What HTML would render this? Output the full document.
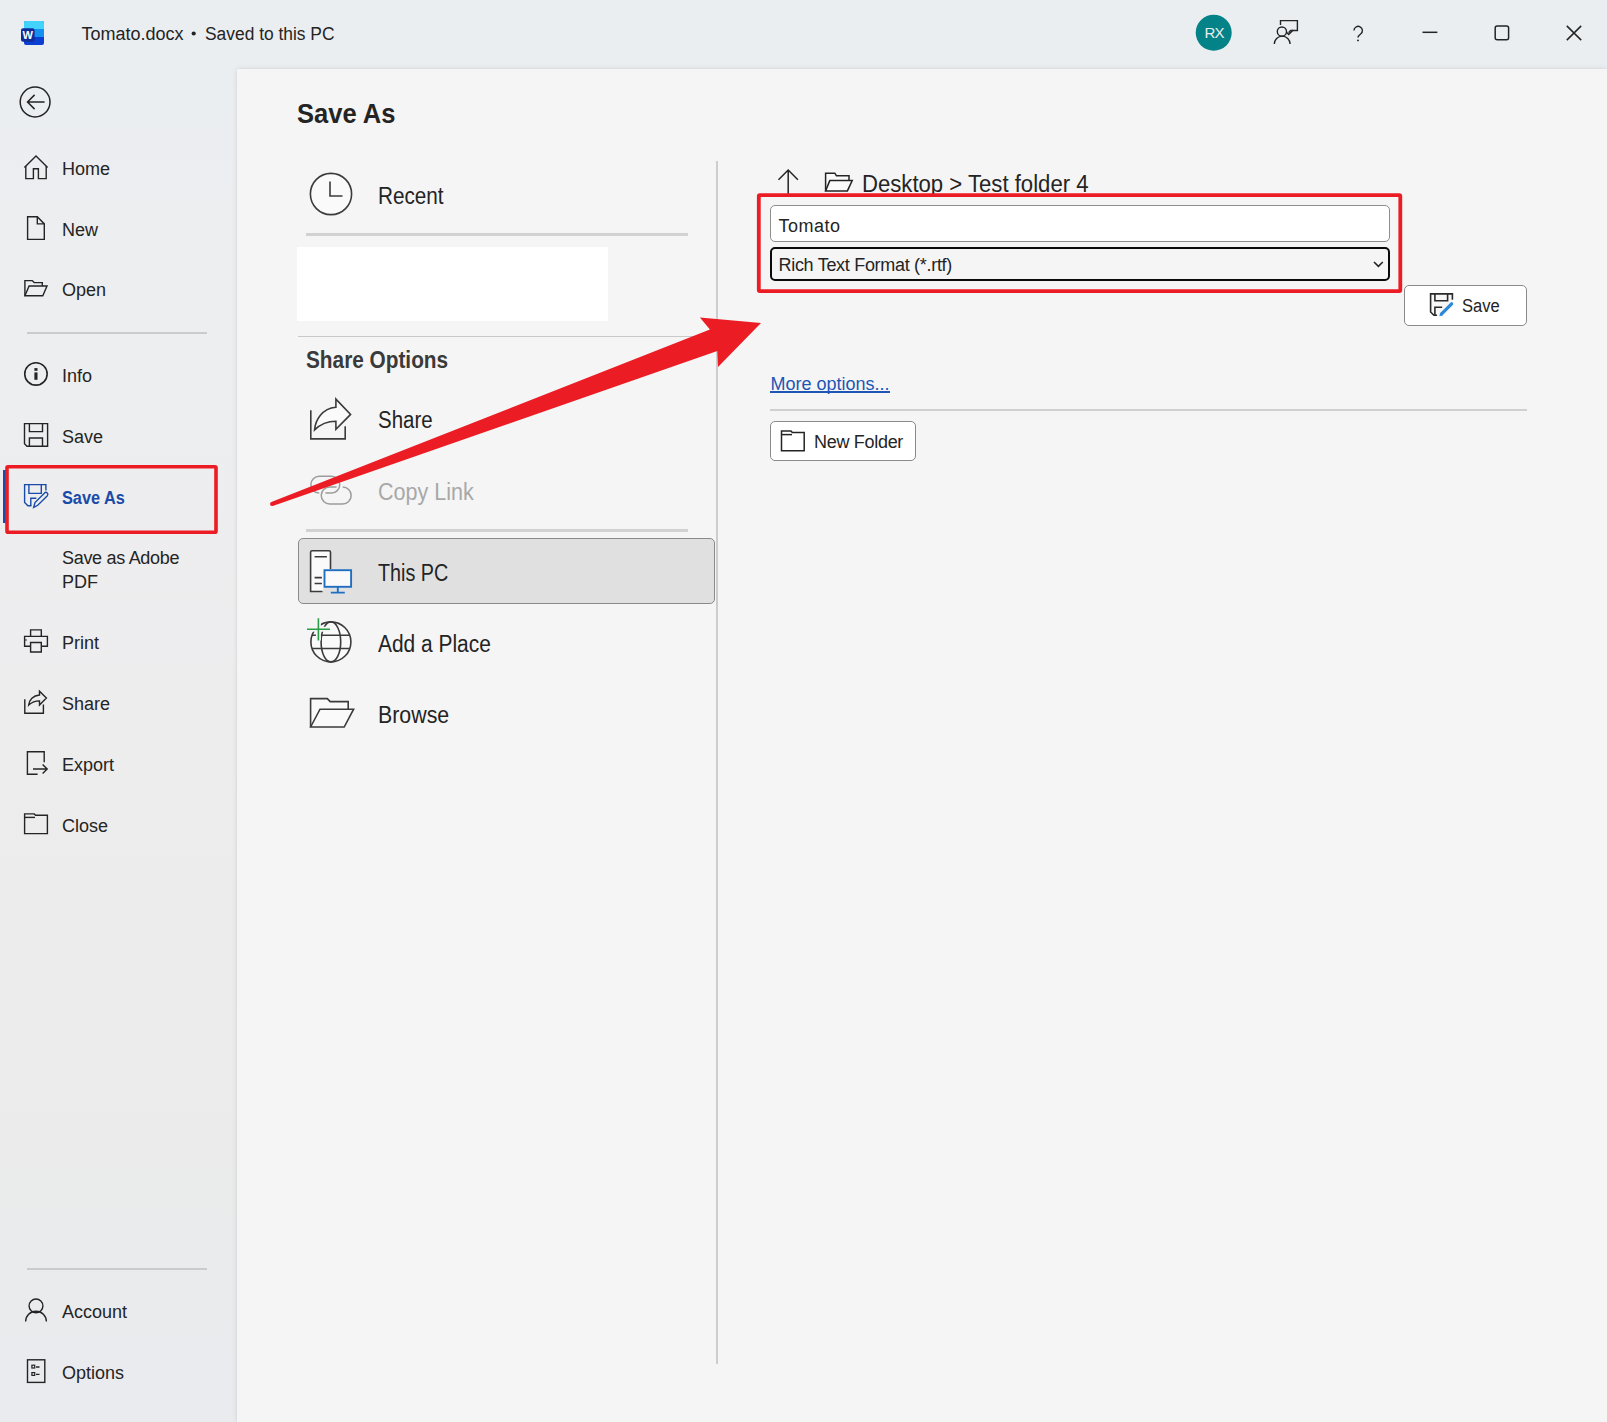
<!DOCTYPE html>
<html><head><meta charset="utf-8">
<style>
html,body{margin:0;padding:0;width:1607px;height:1422px;overflow:hidden;}
body{position:relative;background:#F5F5F5;font-family:"Liberation Sans",sans-serif;color:#242424;}
.t{position:absolute;white-space:nowrap;line-height:1;}
.abs{position:absolute;}
svg{position:absolute;overflow:visible;}
#titlebar{position:absolute;left:0;top:0;width:1607px;height:69px;background:#EBEEF1;}
#sidebar{position:absolute;left:0;top:69px;width:237px;height:1353px;background:linear-gradient(180deg,#EBEEF1 0%,#EDEEF0 20%,#EEEDEE 50%,#EBEBEB 80%,#E9EBEF 100%);}
#content{position:absolute;left:237px;top:69px;width:1370px;height:1353px;background:#F5F5F5;box-shadow:0 0 6px rgba(0,0,0,0.09),0 0 1.5px rgba(0,0,0,0.08);}
.sb{font-size:18px;}
</style></head>
<body>
<div id="titlebar"></div>
<div id="sidebar"></div>
<div id="content"></div>

<!-- Title bar -->
<svg style="left:0;top:0" width="1607" height="68">
  <!-- word icon -->
  <rect x="24" y="21" width="20" height="24" rx="2" fill="#0B3FD1"/>
  <path d="M24 23 a2 2 0 0 1 2 -2 h16 a2 2 0 0 1 2 2 v6 h-20z" fill="#41D3FD"/>
  <rect x="24" y="29" width="20" height="8" fill="#1490F0"/>
  <rect x="21" y="28.2" width="13.6" height="13.6" rx="2" fill="#0F2C9B"/>
  <text x="27.8" y="39.2" font-family="Liberation Sans" font-weight="700" font-size="11" fill="#fff" text-anchor="middle">W</text>
  <!-- avatar -->
  <circle cx="1213.7" cy="32.7" r="18" fill="#038387"/>
  <text x="1214.2" y="38.3" font-family="Liberation Sans" font-size="15" letter-spacing="-0.6" fill="#EDEDED" text-anchor="middle">RX</text>
  <!-- coauthoring icon -->
  <g fill="none" stroke="#242424" stroke-width="1.4">
    <path d="M1280.5 25 V20.6 H1297.4 V30.5 H1290.6 l-2 2.2"/>
    <path d="M1286.5 32.2 l2.2 2.2 l4.5 -4.5"/>
    <circle cx="1281.9" cy="31.6" r="4.6"/>
    <path d="M1274.3 44 A7.9 7.9 0 0 1 1290.1 44"/>
  </g>
  <!-- help -->
  <path d="M1354 30.6 A4.2 4.2 0 1 1 1360.6 34 C1359 35.2 1358 36 1358 37.6" fill="none" stroke="#242424" stroke-width="1.4"/><circle cx="1358" cy="40.4" r="0.95" fill="#242424"/>
  <!-- min -->
  <path d="M1422.5 32.3 H1437.4" stroke="#242424" stroke-width="1.5"/>
  <!-- max -->
  <rect x="1495.2" y="26.1" width="13.4" height="13.6" rx="2" fill="none" stroke="#242424" stroke-width="1.5"/>
  <!-- close -->
  <path d="M1566.8 25.9 L1581.2 40.1 M1581.2 25.9 L1566.8 40.1" stroke="#242424" stroke-width="1.5"/>
</svg>
<div class="t" style="left:81.5px;top:24.7px;font-size:18px;">Tomato.docx</div>
<div class="t" style="left:204.8px;top:24.7px;font-size:18px;transform:scaleX(0.966);transform-origin:0 0;">Saved to this PC</div>
<svg style="left:0;top:0" width="240" height="60"><circle cx="193.7" cy="33.5" r="2.1" fill="#242424"/></svg>

<!-- Sidebar -->
<svg style="left:0;top:0" width="237" height="1422">
 <g fill="none" stroke="#242424" stroke-width="1.4" stroke-linejoin="miter">
  <!-- back -->
  <circle cx="35.1" cy="102" r="14.9" stroke-width="1.5"/>
  <path d="M27.3 102 H44.6 M34.6 94.9 L27.5 102 L34.6 109.1" stroke-width="1.5"/>
  <!-- home -->
  <path d="M24.4 167.6 L36 156 L47.6 167.6"/>
  <path d="M25.8 166 V178.6 H33.4 V168.8 H38.4 V178.6 H46.2 V166"/>
  <!-- new -->
  <path d="M27.6 216.8 H37.3 L44.3 223.9 V239.4 H27.6 Z"/>
  <path d="M37.3 216.8 V223.9 H44.3"/>
  <!-- open -->
  <path d="M24.9 295.7 V280.6 H32.2 L34.2 282.6 H42.3 V286"/>
  <path d="M24.9 295.7 L29.1 286 H47 L42.8 295.7 Z"/>
  <!-- separator handled by div -->
  <!-- info -->
  <circle cx="35.95" cy="373.9" r="11.2" stroke-width="1.6"/>
  <!-- save -->
  <path d="M24.5 423.6 H47.6 V446.3 H27 L24.5 443.8 Z"/>
  <path d="M29.4 423.6 V431.6 H42.5 V423.6"/>
  <path d="M29.4 446.3 V438 H42.5 V446.3"/>
  <!-- print -->
  <path d="M30.6 636.4 V629.9 H41.3 V636.4"/>
  <path d="M30.6 646.3 H24.6 V636.4 H47.4 V646.3 H41.3"/>
  <path d="M30.6 652 V642.5 H41.3 V652 Z"/>
  <!-- share -->
  <path d="M24.8 699.3 V713.3 H43.4 V704.5"/>
  <path d="M28.7 705.1 C29.3 700 33 695.5 39.5 695 V691.2 L46.4 698.1 L39.5 705 V700.9 C35 700.9 31.5 702.5 28.7 705.1 Z" stroke-linejoin="miter"/>
  <!-- export -->
  <path d="M44.2 762.3 V751.7 H27.4 V774.2 H37.6"/>
  <path d="M33 769 H47 M42.6 764.4 L47.2 769 L42.6 773.6"/>
  <!-- close -->
  <path d="M24.6 833.6 V813.9 H34.2 L35.6 815.3 H47.4 V833.6 Z"/>
  <path d="M24.6 817.4 H35"/>
  <!-- account -->
  <circle cx="36" cy="1305.9" r="6.9"/>
  <path d="M25.6 1321.6 A10.4 10.4 0 0 1 46.4 1321.6"/>
  <!-- options -->
  <rect x="27.5" y="1359.8" width="17.3" height="22.6"/>
  <path d="M36 1367 H39.5 M36 1374.4 H39.5"/>
 </g>
 <g fill="#242424">
  <rect x="34.4" y="368.1" width="3.1" height="2.7"/>
  <rect x="34.4" y="372.4" width="3.1" height="7.4"/>
  <circle cx="26" cy="640" r="0.8"/>
 </g>
 <g fill="none" stroke="#242424" stroke-width="1.2">
  <rect x="31.9" y="1365.2" width="2.8" height="2.8"/>
  <rect x="31.9" y="1372.6" width="2.8" height="2.8"/>
 </g>
 <!-- Save As (blue) -->
 <g fill="none" stroke="#1A4BA8" stroke-width="1.4">
  <path d="M31.4 505.8 H27.9 L24.6 502.5 V484.6 H45.9 V490.4"/>
  <path d="M28.9 484.6 V493.4 H41.3 V484.6"/>
  <path d="M30.8 505.8 V498.2 H36.4"/>
  <path d="M33.7 507.3 L35 502.5 L44.6 492.9 A1.95 1.95 0 0 1 47.35 495.65 L37.75 505.25 Z"/>
 </g>
 <!-- active indicator -->
 <rect x="3" y="470" width="3" height="53" fill="#1A4BA8"/>
 <!-- separators -->
 <rect x="27" y="332" width="180" height="2" fill="#CBCBCB"/>
 <rect x="27" y="1268" width="180" height="2" fill="#CBCBCB"/>
</svg>
<div class="t sb" style="left:62px;top:159.5px;">Home</div>
<div class="t sb" style="left:62px;top:220.8px;">New</div>
<div class="t sb" style="left:62px;top:281.3px;">Open</div>
<div class="t sb" style="left:62px;top:367.1px;">Info</div>
<div class="t sb" style="left:62px;top:428.1px;">Save</div>
<div class="t sb" style="left:62px;top:489px;font-weight:700;color:#1A4BA8;transform:scaleX(0.905);transform-origin:0 0;">Save As</div>
<div class="t sb" style="left:62px;top:548.5px;letter-spacing:-0.3px;">Save as Adobe</div>
<div class="t sb" style="left:62px;top:572.8px;">PDF</div>
<div class="t sb" style="left:62px;top:633.8px;">Print</div>
<div class="t sb" style="left:62px;top:694.8px;">Share</div>
<div class="t sb" style="left:62px;top:755.6px;">Export</div>
<div class="t sb" style="left:62px;top:816.6px;">Close</div>
<div class="t sb" style="left:62px;top:1303.4px;">Account</div>
<div class="t sb" style="left:62px;top:1363.7px;">Options</div>

<!-- Middle column -->
<div class="t" style="left:296.5px;top:99.6px;font-size:28px;font-weight:700;color:#242424;transform:scaleX(0.912);transform-origin:0 0;">Save As</div>
<div class="abs" style="left:306px;top:233px;width:382px;height:3px;background:#D2D2D2;"></div>
<div class="abs" style="left:297px;top:247px;width:311px;height:74px;background:#FFFFFF;"></div>
<div class="abs" style="left:298px;top:336px;width:418px;height:1px;background:#C9C9C9;"></div>
<div class="abs" style="left:306px;top:529px;width:382px;height:3px;background:#D2D2D2;"></div>
<div class="abs" style="left:716px;top:161px;width:2px;height:1203px;background:#CDCDCD;"></div>
<div class="abs" style="left:298px;top:537.8px;width:415px;height:64.2px;background:#E0E0E0;border:1px solid #8A8A8A;border-radius:5px;"></div>

<svg style="left:0;top:0" width="760" height="760">
 <g fill="none" stroke="#3B3B3B" stroke-width="1.6">
  <!-- clock -->
  <circle cx="331" cy="194" r="20.6" fill="#FAFAFA"/>
  <path d="M330 181.4 V196 H342.5"/>
  <!-- share big -->
  <path d="M310.8 410.2 V438.9 H345.2 V426.3"/>
  <path d="M314.6 429.9 C315.5 420 322 408.5 335.9 407.3 V399.1 L350.6 414.4 L335.9 429.2 V421.2 C327 421.2 320 424.5 314.6 429.9 Z" fill="#FAFAFA" stroke-linejoin="miter"/>
  <!-- this pc tower -->
  <path d="M322.5 591.5 H310.6 V552.2 A1.5 1.5 0 0 1 312.1 550.7 H329 A1.5 1.5 0 0 1 330.5 552.2 V569" fill="#FAFAFA"/>
  <path d="M314.6 556.7 H326.9 M314.6 577.6 H321.9 M314.6 583.5 H321.9"/>
  <!-- globe -->
  <circle cx="330.9" cy="641.9" r="20" fill="#FAFAFA"/>
  <ellipse cx="330.9" cy="641.9" rx="9.8" ry="20"/>
  <path d="M312 635.2 H350 M312 648.5 H350"/>
  <!-- browse folder -->
  <path d="M310.6 727 V698.6 H327.3 L330.2 701.6 H348.2 V709.2" fill="#FAFAFA"/>
  <path d="M310.6 727 L320 709.2 H353.6 L344.2 727 Z" fill="#FAFAFA"/>
 </g>
 <!-- copy link (gray) -->
 <g fill="none" stroke="#9C9C9C" stroke-width="1.5">
  <path d="M319.2 493.05 A8.35 8.35 0 0 1 319.2 476.35 H331.4 A8.35 8.35 0 0 1 331.4 493.05 H325.4"/>
  <path d="M336.6 487.05 H329.7 A8.475 8.475 0 0 0 329.7 504 H342.7 A8.475 8.475 0 0 0 342.7 487.05"/>
 </g>
 <!-- this PC monitor blue -->
 <g fill="none" stroke="#1F6FC0" stroke-width="1.7">
  <rect x="324.5" y="570.2" width="26.6" height="16.6" fill="#FAFAFA" stroke-width="1.9"/>
  <path d="M337.8 587 V592.5 M330.8 592.6 H344.8" stroke-width="1.9"/>
 </g>
 <!-- globe plus green -->
 <path d="M307 629.3 H330 M318.4 618.2 V640.6" stroke="#F5F5F5" stroke-width="5" fill="none"/>
 <path d="M307 629.3 H330 M318.4 618.2 V640.6" stroke="#2A9D47" stroke-width="1.6" fill="none"/>
</svg>
<div class="t" style="left:378px;top:184.5px;font-size:23px;transform:scaleX(0.90);transform-origin:0 0;">Recent</div>
<div class="t" style="left:305.5px;top:348.9px;font-size:23px;font-weight:700;color:#3A3A3A;transform:scaleX(0.904);transform-origin:0 0;">Share Options</div>
<div class="t" style="left:378px;top:409.1px;font-size:23px;transform:scaleX(0.89);transform-origin:0 0;">Share</div>
<div class="t" style="left:378px;top:480.7px;font-size:23px;color:#A8A8A8;transform:scaleX(0.936);transform-origin:0 0;">Copy Link</div>
<div class="t" style="left:378px;top:561.7px;font-size:23px;transform:scaleX(0.86);transform-origin:0 0;">This PC</div>
<div class="t" style="left:378px;top:632.7px;font-size:23px;transform:scaleX(0.91);transform-origin:0 0;">Add a Place</div>
<div class="t" style="left:378px;top:703.8px;font-size:23px;transform:scaleX(0.928);transform-origin:0 0;">Browse</div>

<!-- Right column -->
<div class="abs" style="left:769.6px;top:205px;width:618.5px;height:34.8px;background:#FFFFFF;border:1px solid #8E8E8E;border-radius:5px;"></div>
<div class="abs" style="left:769.6px;top:247.2px;width:616.5px;height:29.8px;background:#F5F5F5;border:2px solid #0A0A0A;border-radius:5px;"></div>
<div class="abs" style="left:1404px;top:285px;width:121px;height:38.5px;background:#FFFFFF;border:1px solid #8A8A8A;border-radius:5px;"></div>
<div class="abs" style="left:769.8px;top:409px;width:757.5px;height:2px;background:#D0D0D0;"></div>
<div class="abs" style="left:769.8px;top:421.3px;width:144.2px;height:37.6px;background:#FFFFFF;border:1px solid #8A8A8A;border-radius:5px;"></div>
<svg style="left:0;top:0" width="1607" height="480">
 <g fill="none" stroke="#242424" stroke-width="1.5">
  <!-- up arrow -->
  <path d="M788.2 170 V195 M778.5 179.7 L788.2 170 L797.9 179.7"/>
  <!-- folder -->
  <path d="M825.6 190.9 V173.2 H834.8 L836.4 175.7 H849 V180.6" fill="#FAFAFA"/>
  <path d="M825.6 190.9 L829.8 180.6 H852.2 L847.4 190.9 Z" fill="#FAFAFA"/>
  <!-- chevron -->
  <path d="M1374 262 L1378.4 266.4 L1382.8 262" stroke-width="1.6"/>
  <!-- new folder icon -->
  <path d="M781.5 450.8 V431.1 H791 L792.4 432.5 H804.2 V450.8 Z"/>
  <path d="M781.5 434.6 H792"/>
 </g>
 <!-- save btn icon -->
 <g fill="none" stroke="#2A2A2A" stroke-width="1.6">
  <path d="M1437.1 315.3 H1433.9 L1430.6 312 V293.9 H1452.4 V299.7" fill="#F7F7F7"/>
  <path d="M1434.9 293.9 V300.8 H1447.6 V293.9"/>
  <path d="M1434.9 315.3 V307.2 H1442.2"/>
 </g>
 <path d="M1441.6 313.8 L1451.6 303.8" stroke="#F7F7F7" stroke-width="6" stroke-linecap="round"/>
 <path d="M1441.6 313.8 L1451.6 303.8" stroke="#2B88D8" stroke-width="3.2" stroke-linecap="round"/>
 <path d="M1439.3 316.2 L1440.3 312.6 L1442.9 315.2 Z" fill="#2B88D8"/>
</svg>
<div class="t" style="left:862px;top:173px;font-size:23px;transform:scaleX(0.962);transform-origin:0 0;">Desktop &gt; Test folder 4</div>
<div class="t" style="left:778.5px;top:217.3px;font-size:18px;letter-spacing:0.5px;">Tomato</div>
<div class="t" style="left:778.5px;top:256.3px;font-size:18px;letter-spacing:-0.3px;">Rich Text Format (*.rtf)</div>
<div class="t" style="left:770.5px;top:375.2px;font-size:18px;color:#1D56B4;">More options...</div>
<div class="abs" style="left:770px;top:391.2px;width:120px;height:1.6px;background:#1D56B4;"></div>
<div class="t" style="left:814px;top:433.1px;font-size:18px;letter-spacing:-0.3px;">New Folder</div>
<div class="t" style="left:1462px;top:296.8px;font-size:18px;transform:scaleX(0.92);transform-origin:0 0;">Save</div>

<!-- Annotations -->
<svg style="left:0;top:0" width="1607" height="1422">
 <rect x="7" y="466.8" width="209" height="65.5" fill="none" stroke="#EC1C24" stroke-width="3.6" rx="1"/>
 <rect x="758.8" y="195.1" width="641.5" height="96" fill="none" stroke="#EC1C24" stroke-width="3.8" rx="1"/>
 <path d="M271.3 502.1 L709.9 329.6 L699.9 317.4 L761 323 L718 367 L717.3 351 L272.7 505.9 Z" fill="#EC1C24"/>
 <circle cx="272" cy="504" r="2" fill="#EC1C24"/>
</svg>

</body></html>
